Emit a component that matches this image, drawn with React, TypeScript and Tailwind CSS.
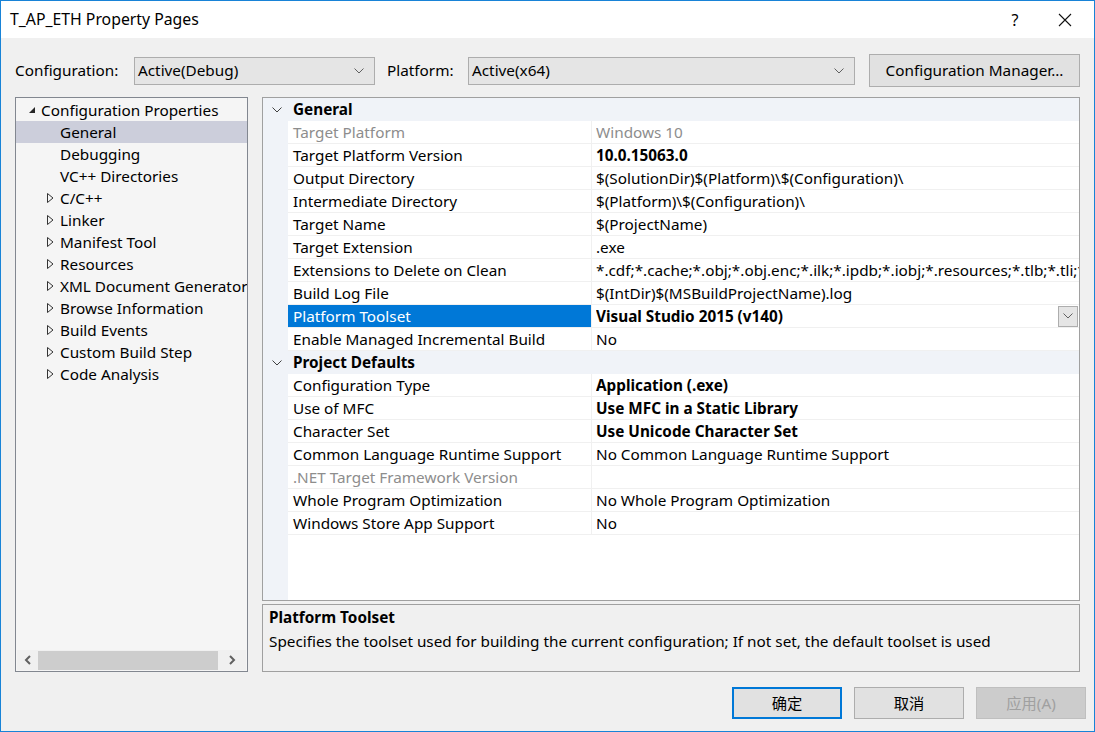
import React from 'react';

type Row = { name: string; value: string; bold?: boolean; dim?: boolean; dimValue?: boolean; selected?: boolean };

const general: Row[] = [
  { name: 'Target Platform', value: 'Windows 10', dim: true, dimValue: true },
  { name: 'Target Platform Version', value: '10.0.15063.0', bold: true },
  { name: 'Output Directory', value: '$(SolutionDir)$(Platform)\\$(Configuration)\\' },
  { name: 'Intermediate Directory', value: '$(Platform)\\$(Configuration)\\' },
  { name: 'Target Name', value: '$(ProjectName)' },
  { name: 'Target Extension', value: '.exe' },
  { name: 'Extensions to Delete on Clean', value: '*.cdf;*.cache;*.obj;*.obj.enc;*.ilk;*.ipdb;*.iobj;*.resources;*.tlb;*.tli;*' },
  { name: 'Build Log File', value: '$(IntDir)$(MSBuildProjectName).log' },
  { name: 'Platform Toolset', value: 'Visual Studio 2015 (v140)', bold: true, selected: true },
  { name: 'Enable Managed Incremental Build', value: 'No' },
];

const defaults: Row[] = [
  { name: 'Configuration Type', value: 'Application (.exe)', bold: true },
  { name: 'Use of MFC', value: 'Use MFC in a Static Library', bold: true },
  { name: 'Character Set', value: 'Use Unicode Character Set', bold: true },
  { name: 'Common Language Runtime Support', value: 'No Common Language Runtime Support' },
  { name: '.NET Target Framework Version', value: '', dim: true },
  { name: 'Whole Program Optimization', value: 'No Whole Program Optimization' },
  { name: 'Windows Store App Support', value: 'No' },
];

const tree: { label: string; depth: 0 | 1; arrow?: 'open' | 'closed'; selected?: boolean }[] = [
  { label: 'Configuration Properties', depth: 0, arrow: 'open' },
  { label: 'General', depth: 1, selected: true },
  { label: 'Debugging', depth: 1 },
  { label: 'VC++ Directories', depth: 1 },
  { label: 'C/C++', depth: 1, arrow: 'closed' },
  { label: 'Linker', depth: 1, arrow: 'closed' },
  { label: 'Manifest Tool', depth: 1, arrow: 'closed' },
  { label: 'Resources', depth: 1, arrow: 'closed' },
  { label: 'XML Document Generator', depth: 1, arrow: 'closed' },
  { label: 'Browse Information', depth: 1, arrow: 'closed' },
  { label: 'Build Events', depth: 1, arrow: 'closed' },
  { label: 'Custom Build Step', depth: 1, arrow: 'closed' },
  { label: 'Code Analysis', depth: 1, arrow: 'closed' },
];

function Chevron({ className = '' }: { className?: string }) {
  return (
    <svg width="10" height="6" viewBox="0 0 10 6" className={className}>
      <path d="M0.5 0.5 L5 5 L9.5 0.5" fill="none" stroke="currentColor" strokeWidth="1" />
    </svg>
  );
}

function Combo({ value, className }: { value: string; className: string }) {
  return (
    <div className={`flex h-[28px] items-center justify-between border border-[#adadad] bg-[#e5e5e5] pl-[3px] pr-[10px] ${className}`}>
      <span>{value}</span>
      <Chevron className="text-[#606060]" />
    </div>
  );
}

function PropRow({ r }: { r: Row }) {
  return (
    <div className="flex h-[23px] border-b border-[#f0f0f0]">
      <div
        className={`flex w-[304px] shrink-0 items-center overflow-hidden whitespace-nowrap border-r border-[#f0f0f0] pl-[5px] ${
          r.selected ? 'bg-[#0078d7] text-white' : r.dim ? 'bg-white text-[#8d8d8d]' : 'bg-white text-black'
        }`}
      >
        {r.name}
      </div>
      <div className="flex min-w-0 flex-1 items-center bg-white pl-[4px]">
        <span className={`min-w-0 flex-1 overflow-hidden whitespace-nowrap ${r.bold ? 'font-bold' : ''} ${r.dimValue ? 'text-[#8d8d8d]' : ''}`}>
          {r.value}
        </span>
        {r.selected && (
          <div className="mr-[1px] flex h-[21px] w-[20px] shrink-0 items-center justify-center border border-[#adadad] bg-[#e5e5e5] text-[#606060]">
            <Chevron />
          </div>
        )}
      </div>
    </div>
  );
}

function Category({ title, rows }: { title: string; rows: Row[] }) {
  return (
    <>
      <div className="flex h-[23px] items-center">
        <div className="flex w-[25px] justify-center pl-[2px]">
          <Chevron className="text-[#404040]" />
        </div>
        <span className="pl-[5px] font-bold">{title}</span>
      </div>
      <div className="pl-[25px]">
        {rows.map((r) => (
          <PropRow key={r.name} r={r} />
        ))}
      </div>
    </>
  );
}

export default function App() {
  return (
    <div
      className="flex h-[732px] w-[1095px] flex-col overflow-hidden border border-t-0 border-[#1883d7] bg-[#f0f0f0] text-[15.3px] text-black"
      style={{ fontFamily: '"Noto Sans", "Noto Sans CJK SC", sans-serif' }}
    >
      {/* title bar */}
      <div className="flex h-[38px] shrink-0 items-center border-t border-[#1883d7] bg-white pl-[9px]">
        <span className="flex-1 text-[15.8px]">T_AP_ETH Property Pages</span>
        <span className="w-[46px] text-center text-[16px]">?</span>
        <div className="flex w-[56px] justify-center pr-[2px]">
          <svg width="14" height="14" viewBox="0 0 14 14">
            <path d="M1 1 L13 13 M13 1 L1 13" stroke="#111" strokeWidth="1.1" />
          </svg>
        </div>
      </div>

      {/* configuration row */}
      <div className="mt-[16px] mb-[10px] flex h-[33px] shrink-0 items-center pl-[14px] pr-[14px]">
        <span className="w-[119px]">Configuration:</span>
        <Combo value="Active(Debug)" className="w-[241px]" />
        <span className="ml-[12px] w-[81px]">Platform:</span>
        <Combo value="Active(x64)" className="w-[387px]" />
        <div className="ml-[14px] flex h-[33px] w-[211px] items-center justify-center border border-[#adadad] bg-[#e1e1e1]">
          Configuration Manager...
        </div>
      </div>

      {/* main */}
      <div className="flex h-[575px] shrink-0 pl-[14px] pr-[14px]">
        {/* tree */}
        <div className="flex w-[233px] shrink-0 flex-col border border-[#828790] bg-[#f5f5f5]">
          <div className="flex-1 pt-[1px]">
            {tree.map((t) => (
              <div
                key={t.label}
                className={`flex h-[22px] items-center overflow-hidden whitespace-nowrap ${t.selected ? 'bg-[#cccedb]' : ''}`}
              >
                <div className={`flex w-[14px] shrink-0 justify-center ${t.depth === 0 ? 'ml-[9px]' : 'ml-[27px]'}`}>
                  {t.arrow === 'open' && (
                    <svg width="8" height="8" viewBox="0 0 8 8">
                      <path d="M7 1 L7 7 L1 7 Z" fill="#262626" />
                    </svg>
                  )}
                  {t.arrow === 'closed' && (
                    <svg width="7" height="10" viewBox="0 0 7 10">
                      <path d="M0.5 0.5 L6 5 L0.5 9.5 Z" fill="none" stroke="#333" strokeWidth="1" />
                    </svg>
                  )}
                </div>
                <span className={t.depth === 0 ? 'ml-[2px]' : 'ml-[3px]'}>{t.label}</span>
              </div>
            ))}
          </div>
          <div className="mx-[1px] mb-[1px] flex h-[20px] items-center bg-[#f0f0f0]">
            <div className="flex w-[21px] justify-center">
              <svg width="8" height="10" viewBox="0 0 8 10">
                <path d="M6 1 L2 5 L6 9" fill="none" stroke="#606060" strokeWidth="2" />
              </svg>
            </div>
            <div className="h-[19px] flex-1 bg-[#cdcdcd]" />
            <div className="flex w-[28px] justify-center">
              <svg width="8" height="10" viewBox="0 0 8 10">
                <path d="M2 1 L6 5 L2 9" fill="none" stroke="#606060" strokeWidth="2" />
              </svg>
            </div>
          </div>
        </div>

        {/* right side */}
        <div className="ml-[14px] flex min-w-0 flex-1 flex-col">
          <div className="h-[504px] overflow-hidden border border-[#a0a0a0] bg-[#f0f3f8]">
            <Category title="General" rows={general} />
            <Category title="Project Defaults" rows={defaults} />
            <div className="ml-[25px] h-[200px] bg-white" />
          </div>
          <div className="mt-[3px] h-[68px] border border-[#a0a0a0] bg-[#f0f0f0] px-[6px] pt-[1px]">
            <div className="font-bold">Platform Toolset</div>
            <div className="mt-[1px] whitespace-nowrap">Specifies the toolset used for building the current configuration; If not set, the default toolset is used</div>
          </div>
        </div>
      </div>

      {/* buttons */}
      <div className="flex flex-1 items-start justify-end gap-[12px] pr-[8px] pt-[15px]">
        <div className="flex h-[32px] w-[110px] items-center justify-center border-2 border-[#0078d7] bg-[#e1e1e1]">确定</div>
        <div className="flex h-[32px] w-[110px] items-center justify-center border border-[#adadad] bg-[#e1e1e1]">取消</div>
        <div className="flex h-[32px] w-[110px] items-center justify-center border border-[#bfbfbf] bg-[#cccccc] text-[#a0a0a0]">应用(A)</div>
      </div>
    </div>
  );
}
